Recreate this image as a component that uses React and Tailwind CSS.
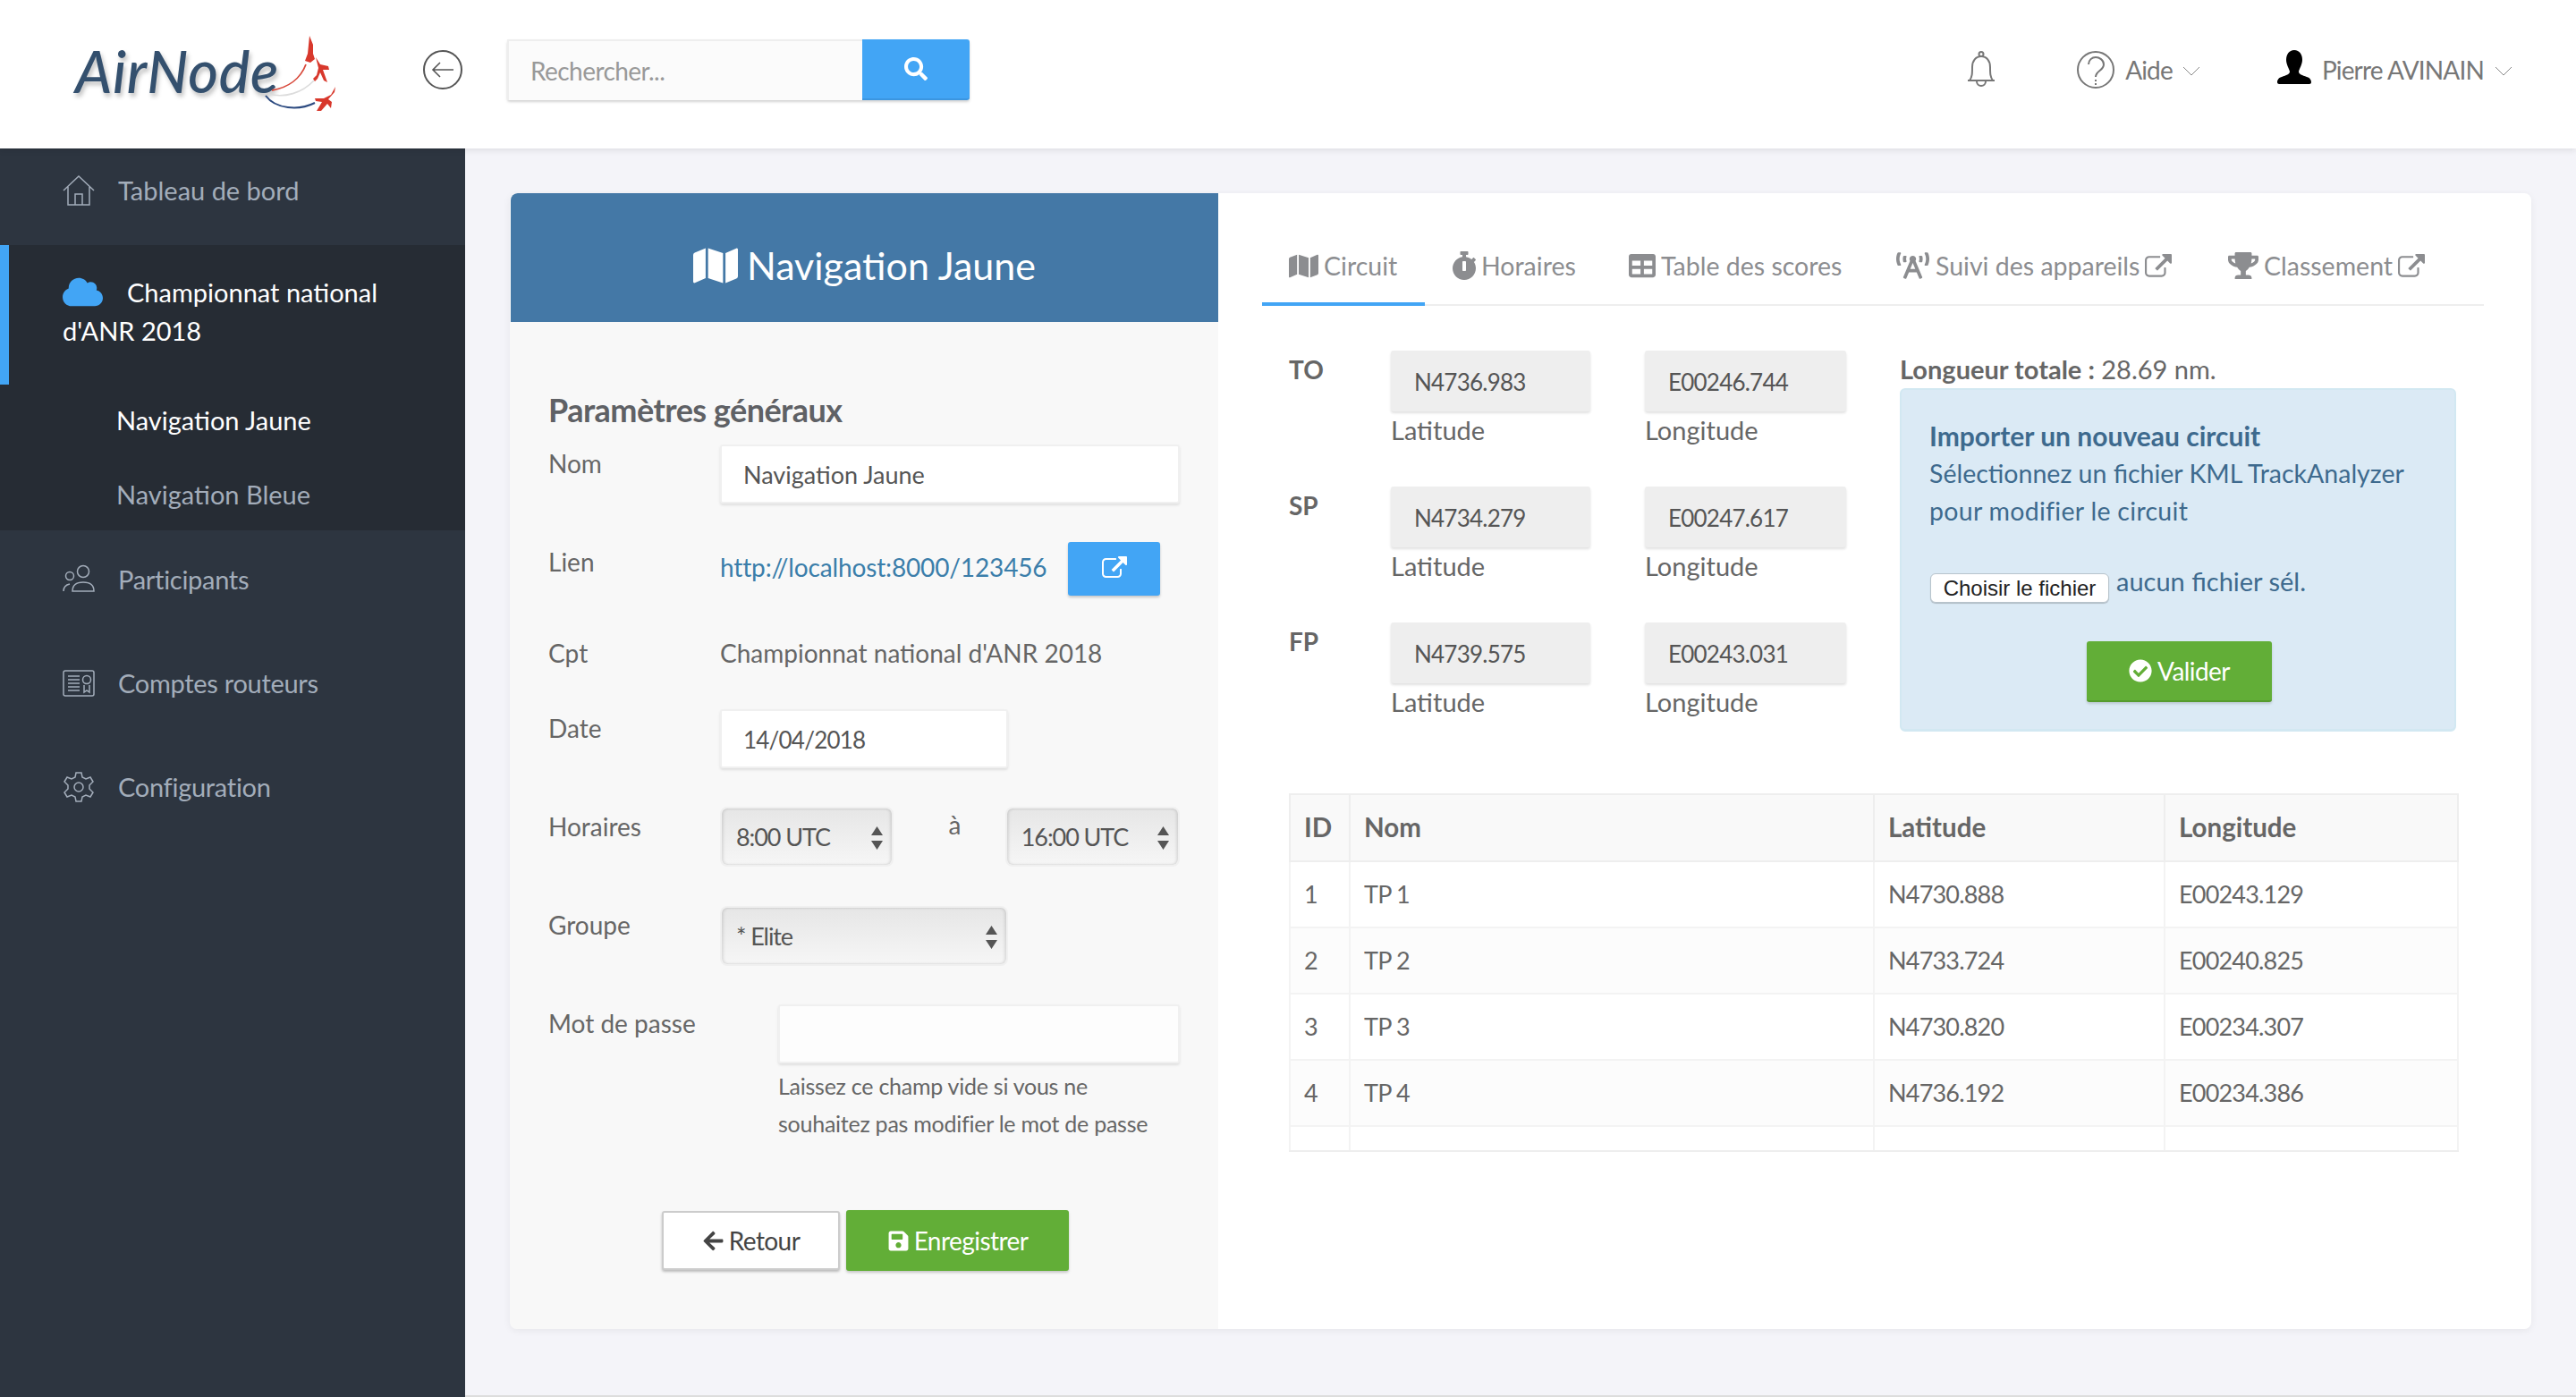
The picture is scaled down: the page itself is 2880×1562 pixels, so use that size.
import { FaMap, FaStopwatch, FaTable, FaBroadcastTower, FaTrophy, FaCheckCircle, FaSave, FaArrowLeft, FaSearch, FaCloud } from 'react-icons/fa'

function ExternalIcon({ className }) {
  return (
    <svg viewBox="0 0 1792 1792" fill="currentColor" className={className}>
      <path d="M1408 928v320q0 119-84.5 203.5t-203.5 84.5h-832q-119 0-203.5-84.5t-84.5-203.5v-832q0-119 84.5-203.5t203.5-84.5h704q14 0 23 9t9 23v64q0 14-9 23t-23 9h-704q-66 0-113 47t-47 113v832q0 66 47 113t113 47h832q66 0 113-47t47-113v-320q0-14 9-23t23-9h64q14 0 23 9t9 23zm384-864v512q0 26-19 45t-45 19-45-19l-176-176-652 652q-10 10-23 10t-23-10l-114-114q-10-10-10-23t10-23l652-652-176-176q-19-19-19-45t19-45 45-19h512q26 0 45 19t19 45z" />
    </svg>
  )
}

function Logo() {
  return (
    <div className="relative w-[473px] h-[166px] flex items-center pl-[84px] shrink-0 mt-[10px]">
      <span className="text-[65px] italic font-medium text-[#34506e] tracking-[0.01em] leading-none mt-[-7px] [text-shadow:2px_4px_5px_rgba(0,0,0,0.25)]">AirNode</span>
      <svg viewBox="290 35 90 95" className="absolute left-[290px] top-[35px] w-[90px] h-[95px]" fill="none">
        <path d="M304 101 C322 98 336 88 342 72" stroke="#d8483a" strokeWidth="1.8" />
        <path d="M300 105 C318 110 338 104 351 90" stroke="#dcdcdc" strokeWidth="1.6" />
        <path d="M297 107 C308 122 334 124 352 115" stroke="#2c4a80" strokeWidth="2" />
        <g fill="#d8382c">
          <path d="M346 40 L350 50 L350 60 L352 66 L347 70 L341 68 L344 60 L345 50 Z" />
          <path d="M353 64 L358 72 L367 74 L368 78 L361 78 L366 92 L362 90 L358 81 L355 88 L352 91 L350 88 L354 84 L356 76 Z" />
          <path d="M375 97 L370 106 L362 110 L352 110 L353 113 L360 114 L354 124 L359 124 L366 116 L370 121 L371 114 L367 111 L374 103 Z" />
        </g>
      </svg>
    </div>
  )
}

function Header() {
  return (
    <header className="relative z-10 h-[166px] shrink-0 bg-white flex items-center pb-[10px] shadow-[0_3px_6px_rgba(0,0,0,0.08)]">
      <Logo />
      <svg viewBox="0 0 44 46" className="w-[44px] h-[46px] text-[#555] shrink-0" fill="none" stroke="currentColor" strokeWidth="2">
        <circle cx="22" cy="23" r="21" />
        <path d="M34 23H11M19 15l-8 8 8 8" strokeWidth="1.6" />
      </svg>
      <div className="ml-[50px] flex h-[68px] w-[517px] rounded-[3px] shadow-[0_2px_3px_rgba(0,0,0,0.18)]">
        <div className="w-[397px] bg-[#fbfbfb] border-t-2 border-l-2 border-[#eeeeee] flex items-center pl-[24px] text-[28px] text-[#999999] tracking-[-0.02em]">Rechercher...</div>
        <div className="w-[120px] bg-[#42a5f5] border-b-2 border-[#3b96e0] rounded-r-[3px] flex items-center justify-center text-white">
          <FaSearch className="w-[26px] h-[26px]" />
        </div>
      </div>
      <div className="ml-auto flex items-center pr-[71px] text-[#777777] text-[28px] tracking-[-0.03em]">
        <svg viewBox="0 0 32 40" className="w-[32px] h-[40px] mt-[-2px]" fill="none" stroke="#777" strokeWidth="2">
          <path d="M1 33h30M3 33c3-4 3-8 3-15 0-7 4-12 10-12s10 5 10 12c0 7 0 11 3 15" />
          <circle cx="16" cy="3.5" r="2.5" />
          <path d="M11 34a5 5 0 0 0 10 0" />
        </svg>
        <svg viewBox="0 0 42 42" className="w-[42px] h-[42px] ml-[91px]" fill="none" stroke="#777" strokeWidth="2">
          <circle cx="21" cy="21" r="20" />
          <path d="M13 15c0-5 4-8 8-8s9 3 9 8c0 7-9 7-9 14M21 32v2M21 36v2" />
        </svg>
        <span className="ml-[12px]">Aide</span>
        <svg viewBox="0 0 20 11" className="w-[20px] h-[11px] ml-[11px] mt-[3px]" fill="none" stroke="#888" strokeWidth="1"><path d="M1 1l9 9 9-9" /></svg>
        <svg viewBox="0 0 38 38" className="w-[38px] h-[38px] ml-[86px] mt-[-6px]" fill="#000">
          <path d="M19 0c6 0 9 5 9 11 0 5-3 9-4 13 0 3 4 4 9 6 4 1 5 4 5 6 0 1-1 2-2 2H2c-1 0-2-1-2-2 0-2 1-5 5-6 5-2 9-3 9-6-1-4-4-8-4-13C10 5 13 0 19 0z" />
        </svg>
        <span className="ml-[12px]">Pierre AVINAIN</span>
        <svg viewBox="0 0 20 11" className="w-[20px] h-[11px] ml-[12px] mt-[3px]" fill="none" stroke="#888" strokeWidth="1"><path d="M1 1l9 9 9-9" /></svg>
      </div>
    </header>
  )
}

function SideItem({ icon, label }) {
  return (
    <div className="h-[116px] flex items-center pl-[70px] pb-[6px] text-[#a3adba] tracking-[-0.01em]">
      <span className="w-[36px] h-[36px] shrink-0">{icon}</span>
      <span className="ml-[26px]">{label}</span>
    </div>
  )
}

function Sidebar() {
  const line = { fill: 'none', stroke: '#a3adba', strokeWidth: 1.5 }
  return (
    <aside className="w-[520px] shrink-0 bg-[#2d3540] text-[29px]">
      <div className="h-[108px] flex pt-[26px] pl-[70px] text-[#a3adba]">
        <svg viewBox="0 0 36 36" className="w-[36px] h-[36px] mt-[3px] shrink-0" {...line}>
          <path d="M1 18L18 2l17 16M6 14v20h24V14M14 34V22h8v12" />
        </svg>
        <span className="ml-[26px] leading-[42px]">Tableau de bord</span>
      </div>
      <div className="bg-[#262c34]">
        <div className="border-l-[10px] border-[#42a5f5] pl-[60px] h-[156px] pt-[30px] leading-[42px] text-white">
          <div className="flex items-center">
            <FaCloud className="w-[45px] h-[45px] text-[#42a5f5]" />
            <span className="ml-[27px]">Championnat national</span>
          </div>
          <div>d'ANR 2018</div>
        </div>
        <div className="h-[163px] pl-[130px]">
          <div className="pt-[19px] leading-[42px] text-white">Navigation Jaune</div>
          <div className="pt-[41px] leading-[42px] text-[#a3adba]">Navigation Bleue</div>
        </div>
      </div>
      <SideItem label="Participants" icon={
        <svg viewBox="0 0 36 36" {...line}>
          <circle cx="23" cy="9" r="6.5" /><path d="M11 31c0-7 5-10 12-10s12 3 12 10z" />
          <circle cx="8" cy="14" r="4.5" /><path d="M1 31c0-4 2-7 7-8" />
        </svg>
      } />
      <SideItem label="Comptes routeurs" icon={
        <svg viewBox="0 0 36 36" {...line}>
          <rect x="1" y="4" width="34" height="28" rx="2" />
          <path d="M6 10h13M6 14h13M6 18h13M6 22h13M6 26h13M24 20v8l3-2 3 2v-8" /><circle cx="27" cy="14" r="4.5" />
        </svg>
      } />
      <SideItem label="Configuration" icon={
        <svg viewBox="0 0 36 36" {...line}>
          <circle cx="18" cy="18" r="5" />
          <path d="M15 2h6l1 5 4 2 5-2 3 5-4 4v4l4 4-3 5-5-2-4 2-1 5h-6l-1-5-4-2-5 2-3-5 4-4v-4l-4-4 3-5 5 2 4-2z" />
        </svg>
      } />
    </aside>
  )
}

function Field({ value, className }) {
  return (
    <input readOnly value={value} className={`h-[66px] bg-white border-2 border-[#f0f0f0] rounded-[3px] pl-[24px] pt-px text-[#555555] shadow-[0_2px_3px_rgba(0,0,0,0.1)] outline-none ${className}`} />
  )
}

function FakeSelect({ value, className }) {
  return (
    <div className={`h-[67px] flex items-center justify-between pl-[16px] pr-[10px] pt-[2px] rounded-[8px] border-2 border-[#f0f0f0] bg-gradient-to-b from-[#e6e6e6] to-[#f6f6f6] shadow-[inset_2px_0_3px_rgba(0,0,0,0.1),inset_-2px_0_3px_rgba(0,0,0,0.1)] text-[27px] text-[#555555] tracking-[-0.04em] ${className}`}>
      <span>{value}</span>
      <svg viewBox="0 0 13 26" className="w-[13px] h-[26px]" fill="#555"><path d="M6.5 0L13 10H0zM6.5 26L0 16h13z" /></svg>
    </div>
  )
}

function Row({ label, mt, h, labelCls = '', labelW = 'w-[192px]', children }) {
  return (
    <div className={`flex ${mt} ${h}`}>
      <div className={`${labelW} shrink-0 leading-[42px] text-[#666666] ${labelCls}`}>{label}</div>
      {children}
    </div>
  )
}

function LeftPanel() {
  return (
    <section className="w-[792px] shrink-0 bg-[#f8f8f8] flex flex-col">
      <div className="h-[144px] ml-px bg-[#4478a6] rounded-tl-[8px] flex items-center justify-center text-white text-[43px] pt-[18px]">
        <FaMap className="w-[50px] h-[50px] mr-[10px]" />
        Navigation Jaune
      </div>
      <div className="px-[43px] text-[28px]">
        <h2 className="mt-[76px] mb-[2px] h-[44px] leading-[44px] text-[36px] font-bold text-[#5f6165] tracking-[-0.015em]">Paramètres généraux</h2>
        <Row label="Nom" mt="mt-[17px]" h="h-[66px]">
          <Field value="Navigation Jaune" className="w-[516px] text-[27px]" />
        </Row>
        <Row label="Lien" mt="mt-[43px]" h="h-[60px]" labelCls="pt-px">
          <div className="w-[389px] leading-[56px] text-[#3b7eaa] tracking-[-0.005em]">http://localhost:8000/123456</div>
          <div className="w-[103px] h-[60px] bg-[#42a5f5] rounded-[3px] flex items-center justify-center text-white shadow-[0_2px_3px_rgba(0,0,0,0.2)]">
            <ExternalIcon className="w-[28px] h-[28px]" />
          </div>
        </Row>
        <Row label="Cpt" mt="mt-[43px]" h="h-[42px]">
          <div className="leading-[42px] text-[#666666]">Championnat national d'ANR 2018</div>
        </Row>
        <Row label="Date" mt="mt-[42px]" h="h-[66px]">
          <Field value="14/04/2018" className="w-[322px] text-[26px] tracking-[-0.03em]" />
        </Row>
        <Row label="Horaires" mt="mt-[43px]" h="h-[67px]" labelCls="pt-px">
          <FakeSelect value="8:00 UTC" className="w-[195px]" />
          <div className="w-[125px] pl-[12px] text-center leading-[40px] text-[#666666]">à</div>
          <FakeSelect value="16:00 UTC" className="w-[196px]" />
        </Row>
        <Row label="Groupe" mt="mt-[44px]" h="h-[67px]">
          <FakeSelect value="* Elite" className="w-[322px]" />
        </Row>
        <Row label="Mot de passe" mt="mt-[43px]" h="h-[154px]" labelW="w-[257px]">
          <div className="w-[451px]">
            <input readOnly className="block w-full h-[66px] bg-[#fdfdfd] border-2 border-[#f0f0f0] rounded-[3px] shadow-[0_2px_3px_rgba(0,0,0,0.1)] outline-none" />
            <p className="mt-[4px] text-[25px] leading-[42px] text-[#666666] tracking-[-0.01em]">Laissez ce champ vide si vous ne<br />souhaitez pas modifier le mot de passe</p>
          </div>
        </Row>
        <div className="mt-[76px] ml-[127px] flex items-start tracking-[-0.02em]">
          <div className="mt-px w-[199px] h-[66px] bg-white border-2 border-[#cccccc] rounded-[3px] shadow-[0_2px_3px_rgba(0,0,0,0.25)] flex items-center justify-center text-[#444444]">
            <FaArrowLeft className="w-[25px] h-[25px] mr-[5px]" />Retour
          </div>
          <div className="ml-[7px] w-[249px] h-[68px] bg-[#62ae37] rounded-[3px] shadow-[0_2px_3px_rgba(0,0,0,0.2)] flex items-center justify-center text-white">
            <FaSave className="w-[25px] h-[25px] mr-[5px]" />Enregistrer
          </div>
        </div>
      </div>
    </section>
  )
}

function Tabs() {
  const muted = 'flex items-center pl-[30px] text-[#8c8d90]'
  return (
    <nav className="h-[126px] flex items-stretch border-b-2 border-[#eeeeee] text-[28.5px]">
      <div className="w-[182px] flex items-center pl-[30px] pt-[40px] pb-[2px] text-[#8c8d90] relative">
        <FaMap className="w-[33px] h-[33px] mr-[6px] shrink-0" />Circuit
        <span className="absolute left-0 right-0 bottom-[-2px] h-[4px] bg-[#42a5f5]" />
      </div>
      <div className={`w-[198px] pt-[40px] pb-[2px] ${muted}`}>
        <FaStopwatch className="w-[28px] h-[32px] mr-[5px] shrink-0" />Horaires
      </div>
      <div className={`w-[299px] pt-[40px] pb-[2px] ${muted}`}>
        <FaTable className="w-[30px] h-[30px] mr-[6px] shrink-0" />Table des scores
      </div>
      <div className={`w-[371px] pt-[40px] pb-[2px] ${muted}`}>
        <FaBroadcastTower className="w-[37px] h-[32px] mr-[7px] shrink-0" />Suivi des appareils
        <ExternalIcon className="w-[30px] h-[30px] ml-[6px] mt-[4px] shrink-0" />
      </div>
      <div className={`w-[285px] pt-[40px] pb-[2px] ${muted}`}>
        <FaTrophy className="w-[34px] h-[32px] mr-[6px] shrink-0" />Classement
        <ExternalIcon className="w-[30px] h-[30px] ml-[6px] mt-[4px] shrink-0" />
      </div>
    </nav>
  )
}

function Coord({ value, label, className }) {
  return (
    <div className={className}>
      <div className="h-[68px] bg-[#eeeeee] rounded-[3px] flex items-center pl-[26px] pt-[2px] text-[26px] text-[#555555] tracking-[-0.03em] shadow-[0_2px_3px_rgba(0,0,0,0.12)]">{value}</div>
      <div className="leading-[42px] text-[#666666] text-[29px]">{label}</div>
    </div>
  )
}

const points = [
  { name: 'TO', lat: 'N4736.983', lon: 'E00246.744' },
  { name: 'SP', lat: 'N4734.279', lon: 'E00247.617' },
  { name: 'FP', lat: 'N4739.575', lon: 'E00243.031' },
]

const turnpoints = [
  ['1', 'TP 1', 'N4730.888', 'E00243.129'],
  ['2', 'TP 2', 'N4733.724', 'E00240.825'],
  ['3', 'TP 3', 'N4730.820', 'E00234.307'],
  ['4', 'TP 4', 'N4736.192', 'E00234.386'],
]

function RightPanel() {
  return (
    <section className="flex-1 bg-white pl-[49px] pr-[53px]">
      <Tabs />
      <div className="pl-[30px] mt-[50px] flex w-[1335px] text-[#666666]">
        <div className="w-[683px] shrink-0">
          {points.map((p) => (
            <div key={p.name} className="h-[152px] flex">
              <div className="w-[114px] leading-[42px] font-bold text-[28px]">{p.name}</div>
              <Coord value={p.lat} label="Latitude" className="w-[223px]" />
              <Coord value={p.lon} label="Longitude" className="w-[225px] ml-[61px]" />
            </div>
          ))}
        </div>
        <div className="w-[622px]">
          <div className="h-[42px] leading-[41px] text-[29px]"><b>Longueur totale :</b> 28.69 nm.</div>
          <div className="h-[384px] bg-[#dbeaf5] border-2 border-b-[3px] border-[#d2e8f2] rounded-[6px] pl-[31px] pr-[10px] pt-[30px] text-[#3e6a8e] text-[28.5px] leading-[42px]">
            <div className="font-bold text-[30px]">Importer un nouveau circuit</div>
            <div>Sélectionnez un fichier KML TrackAnalyzer</div>
            <div className="tracking-[0.01em]">pour modifier le circuit</div>
            <div className="mt-[49px] ml-px flex h-[34px] items-start">
              <div className="w-[200px] h-[33px] bg-white rounded-[6px] border border-[#b8c4cc] shadow-[0_1px_1px_rgba(0,0,0,0.2)] flex items-center justify-center text-[24px] text-[#222222] font-[family-name:Liberation_Sans,sans-serif]">Choisir le fichier</div>
              <span className="ml-[8px] leading-[18px] text-[29px]">aucun fichier sél.</span>
            </div>
            <div className="mt-[42px] ml-[176px] w-[207px] h-[68px] bg-[#62ae37] border-b-2 border-[#559b2e] rounded-[3px] shadow-[0_2px_3px_rgba(0,0,0,0.15)] flex items-center justify-center text-white text-[28px] tracking-[-0.02em]">
              <FaCheckCircle className="w-[26px] h-[26px] mr-[6px]" />Valider
            </div>
          </div>
        </div>
      </div>
      <table className="ml-[30px] mt-[39px] w-[1306px] table-fixed border-collapse text-[27px] text-[#666666] tracking-[-0.03em]">
        <colgroup>
          <col className="w-[67px]" /><col className="w-[586px]" /><col className="w-[325px]" /><col className="w-[328px]" />
        </colgroup>
        <thead>
          <tr className="h-[75px] bg-[#f9f9f9] text-left">
            {['ID', 'Nom', 'Latitude', 'Longitude'].map((h) => (
              <th key={h} className="border-2 border-[#eeeeee] pl-[15px] text-[29.5px] font-bold tracking-normal">{h}</th>
            ))}
          </tr>
        </thead>
        <tbody>
          {turnpoints.map((row, i) => (
            <tr key={row[0]} className={`h-[74px] ${i % 2 ? 'bg-[#fcfcfc]' : 'bg-white'}`}>
              {row.map((c, j) => (
                <td key={j} className="border-2 border-[#f3f3f3] pl-[15px]">{c}</td>
              ))}
            </tr>
          ))}
          <tr className="h-[28px]">
            {[0, 1, 2, 3].map((j) => <td key={j} className="border-2 border-[#f3f3f3] border-b-[#eeeeee]" />)}
          </tr>
        </tbody>
      </table>
    </section>
  )
}

export default function App() {
  return (
    <div className="w-[2880px] h-[1562px] flex flex-col overflow-hidden bg-[#f4f4f9] font-[family-name:Lato,sans-serif]">
      <Header />
      <div className="flex flex-1 min-h-0">
        <Sidebar />
        <main className="flex-1 pl-[50px] pr-[50px] pt-[50px] border-b-2 border-[#dddddd]">
          <div className="flex h-[1270px] rounded-[8px] overflow-hidden shadow-[0_2px_8px_rgba(0,0,0,0.06)]">
            <LeftPanel />
            <RightPanel />
          </div>
        </main>
      </div>
    </div>
  )
}
